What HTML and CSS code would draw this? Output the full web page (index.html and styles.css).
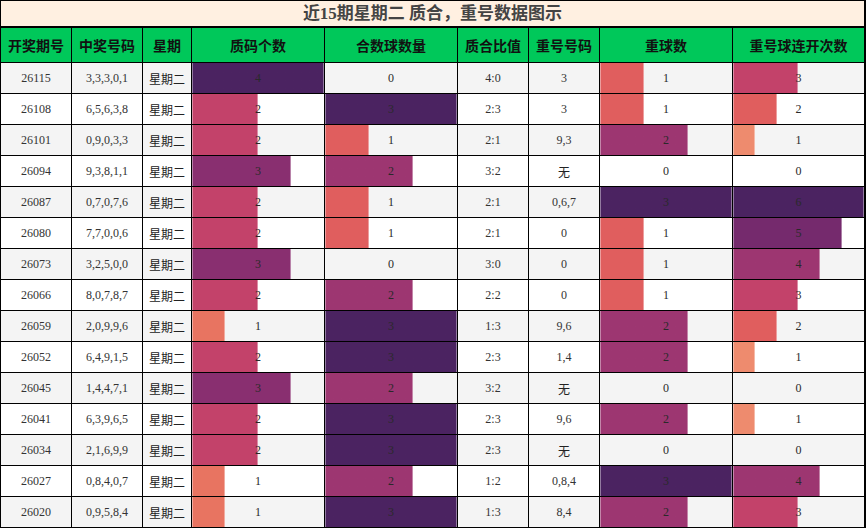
FILE: index.html
```html
<!DOCTYPE html>
<html lang="zh">
<head>
<meta charset="utf-8">
<title>近15期星期二 质合，重号数据图示</title>
<link rel="stylesheet" href="styles.css">
</head>
<body>
<div class="chart">
  <div class="title">近15期星期二 质合，重号数据图示</div>
  <div class="table">
    <div class="row head">
      <div class="cell">开奖期号</div><div class="cell">中奖号码</div><div class="cell">星期</div><div class="cell">质码个数</div><div class="cell">合数球数量</div><div class="cell">质合比值</div><div class="cell">重号号码</div><div class="cell">重球数</div><div class="cell">重号球连开次数</div>
    </div>
    <div class="row odd">
      <div class="cell">26115</div><div class="cell">3,3,3,0,1</div><div class="cell cjk">星期二</div>
      <div class="cell bar" style="--w:100%;--c:#4b2361">4</div><div class="cell bar">0</div>
      <div class="cell">4:0</div><div class="cell">3</div>
      <div class="cell bar" style="--w:33.33%;--c:#e05e5e">1</div><div class="cell bar" style="--w:50%;--c:#c3426a">3</div>
    </div>
    <div class="row">
      <div class="cell">26108</div><div class="cell">6,5,6,3,8</div><div class="cell cjk">星期二</div>
      <div class="cell bar" style="--w:50%;--c:#c3426a">2</div><div class="cell bar" style="--w:100%;--c:#4b2361">3</div>
      <div class="cell">2:3</div><div class="cell">3</div>
      <div class="cell bar" style="--w:33.33%;--c:#e05e5e">1</div><div class="cell bar" style="--w:33.33%;--c:#e05e5e">2</div>
    </div>
    <div class="row odd">
      <div class="cell">26101</div><div class="cell">0,9,0,3,3</div><div class="cell cjk">星期二</div>
      <div class="cell bar" style="--w:50%;--c:#c3426a">2</div><div class="cell bar" style="--w:33.33%;--c:#e05e5e">1</div>
      <div class="cell">2:1</div><div class="cell">9,3</div>
      <div class="cell bar" style="--w:66.67%;--c:#9d3671">2</div><div class="cell bar" style="--w:16.67%;--c:#ee8b6e">1</div>
    </div>
    <div class="row">
      <div class="cell">26094</div><div class="cell">9,3,8,1,1</div><div class="cell cjk">星期二</div>
      <div class="cell bar" style="--w:75%;--c:#892f70">3</div><div class="cell bar" style="--w:66.67%;--c:#9d3671">2</div>
      <div class="cell">3:2</div><div class="cell cjk">无</div>
      <div class="cell bar">0</div><div class="cell bar">0</div>
    </div>
    <div class="row odd">
      <div class="cell">26087</div><div class="cell">0,7,0,7,6</div><div class="cell cjk">星期二</div>
      <div class="cell bar" style="--w:50%;--c:#c3426a">2</div><div class="cell bar" style="--w:33.33%;--c:#e05e5e">1</div>
      <div class="cell">2:1</div><div class="cell">0,6,7</div>
      <div class="cell bar" style="--w:100%;--c:#4b2361">3</div><div class="cell bar" style="--w:100%;--c:#4b2361">6</div>
    </div>
    <div class="row">
      <div class="cell">26080</div><div class="cell">7,7,0,0,6</div><div class="cell cjk">星期二</div>
      <div class="cell bar" style="--w:50%;--c:#c3426a">2</div><div class="cell bar" style="--w:33.33%;--c:#e05e5e">1</div>
      <div class="cell">2:1</div><div class="cell">0</div>
      <div class="cell bar" style="--w:33.33%;--c:#e05e5e">1</div><div class="cell bar" style="--w:83.33%;--c:#752a6d">5</div>
    </div>
    <div class="row odd">
      <div class="cell">26073</div><div class="cell">3,2,5,0,0</div><div class="cell cjk">星期二</div>
      <div class="cell bar" style="--w:75%;--c:#892f70">3</div><div class="cell bar">0</div>
      <div class="cell">3:0</div><div class="cell">0</div>
      <div class="cell bar" style="--w:33.33%;--c:#e05e5e">1</div><div class="cell bar" style="--w:66.67%;--c:#9d3671">4</div>
    </div>
    <div class="row">
      <div class="cell">26066</div><div class="cell">8,0,7,8,7</div><div class="cell cjk">星期二</div>
      <div class="cell bar" style="--w:50%;--c:#c3426a">2</div><div class="cell bar" style="--w:66.67%;--c:#9d3671">2</div>
      <div class="cell">2:2</div><div class="cell">0</div>
      <div class="cell bar" style="--w:33.33%;--c:#e05e5e">1</div><div class="cell bar" style="--w:50%;--c:#c3426a">3</div>
    </div>
    <div class="row odd">
      <div class="cell">26059</div><div class="cell">2,0,9,9,6</div><div class="cell cjk">星期二</div>
      <div class="cell bar" style="--w:25%;--c:#e87461">1</div><div class="cell bar" style="--w:100%;--c:#4b2361">3</div>
      <div class="cell">1:3</div><div class="cell">9,6</div>
      <div class="cell bar" style="--w:66.67%;--c:#9d3671">2</div><div class="cell bar" style="--w:33.33%;--c:#e05e5e">2</div>
    </div>
    <div class="row">
      <div class="cell">26052</div><div class="cell">6,4,9,1,5</div><div class="cell cjk">星期二</div>
      <div class="cell bar" style="--w:50%;--c:#c3426a">2</div><div class="cell bar" style="--w:100%;--c:#4b2361">3</div>
      <div class="cell">2:3</div><div class="cell">1,4</div>
      <div class="cell bar" style="--w:66.67%;--c:#9d3671">2</div><div class="cell bar" style="--w:16.67%;--c:#ee8b6e">1</div>
    </div>
    <div class="row odd">
      <div class="cell">26045</div><div class="cell">1,4,4,7,1</div><div class="cell cjk">星期二</div>
      <div class="cell bar" style="--w:75%;--c:#892f70">3</div><div class="cell bar" style="--w:66.67%;--c:#9d3671">2</div>
      <div class="cell">3:2</div><div class="cell cjk">无</div>
      <div class="cell bar">0</div><div class="cell bar">0</div>
    </div>
    <div class="row">
      <div class="cell">26041</div><div class="cell">6,3,9,6,5</div><div class="cell cjk">星期二</div>
      <div class="cell bar" style="--w:50%;--c:#c3426a">2</div><div class="cell bar" style="--w:100%;--c:#4b2361">3</div>
      <div class="cell">2:3</div><div class="cell">9,6</div>
      <div class="cell bar" style="--w:66.67%;--c:#9d3671">2</div><div class="cell bar" style="--w:16.67%;--c:#ee8b6e">1</div>
    </div>
    <div class="row odd">
      <div class="cell">26034</div><div class="cell">2,1,6,9,9</div><div class="cell cjk">星期二</div>
      <div class="cell bar" style="--w:50%;--c:#c3426a">2</div><div class="cell bar" style="--w:100%;--c:#4b2361">3</div>
      <div class="cell">2:3</div><div class="cell cjk">无</div>
      <div class="cell bar">0</div><div class="cell bar">0</div>
    </div>
    <div class="row">
      <div class="cell">26027</div><div class="cell">0,8,4,0,7</div><div class="cell cjk">星期二</div>
      <div class="cell bar" style="--w:25%;--c:#e87461">1</div><div class="cell bar" style="--w:66.67%;--c:#9d3671">2</div>
      <div class="cell">1:2</div><div class="cell">0,8,4</div>
      <div class="cell bar" style="--w:100%;--c:#4b2361">3</div><div class="cell bar" style="--w:66.67%;--c:#9d3671">4</div>
    </div>
    <div class="row odd">
      <div class="cell">26020</div><div class="cell">0,9,5,8,4</div><div class="cell cjk">星期二</div>
      <div class="cell bar" style="--w:25%;--c:#e87461">1</div><div class="cell bar" style="--w:100%;--c:#4b2361">3</div>
      <div class="cell">1:3</div><div class="cell">8,4</div>
      <div class="cell bar" style="--w:66.67%;--c:#9d3671">2</div><div class="cell bar" style="--w:50%;--c:#c3426a">3</div>
    </div>
  </div>
</div>
</body>
</html>
```

FILE: styles.css
```css
* { box-sizing: border-box; }

html, body {
  margin: 0;
  padding: 0;
  background: #ffffff;
}

body {
  font-family: "Liberation Serif", "Noto Sans CJK SC", serif;
  color: #333333;
}

.chart {
  width: 866px;
}

.title {
  height: 27px;
  border: 1px solid #000;
  border-right-width: 2px;
  background: #fff0e1;
  color: #444444;
  font-size: 17px;
  font-weight: bold;
  line-height: 25px;
  text-align: center;
}

.table {
  display: flex;
  flex-direction: column;
  gap: 1px;
  background: #000;
  padding: 1px 2px 1px 1px;
}

.row {
  display: grid;
  grid-template-columns: 70px 70px 48px 132px 132px 70px 70px 132px 131px;
  gap: 1px;
  height: 30px;
}

.cell {
  display: flex;
  align-items: center;
  justify-content: center;
  background-color: #ffffff;
  font-size: 12px;
  white-space: nowrap;
}

.row.odd .cell {
  background-color: #f4f4f4;
}

.cjk {
  font-family: "Noto Sans CJK SC", sans-serif;
  font-size: 12px;
  color: #222;
}

.head {
  height: 34px;
}

.head .cell {
  background-color: #00c85a;
  font-family: "Noto Sans CJK SC", sans-serif;
  font-weight: bold;
  font-size: 14px;
  color: #111;
}

.bar {
  --w: 0%;
  --c: transparent;
  --e: color-mix(in srgb, var(--c) 60%, #ffffff);
  background-image: linear-gradient(to right,
    var(--e) 0, var(--e) 1px,
    var(--c) 1px, var(--c) calc(var(--w) - 1px),
    var(--e) calc(var(--w) - 1px), var(--e) var(--w),
    transparent var(--w));
  color: #2a2a2a;
}
```
